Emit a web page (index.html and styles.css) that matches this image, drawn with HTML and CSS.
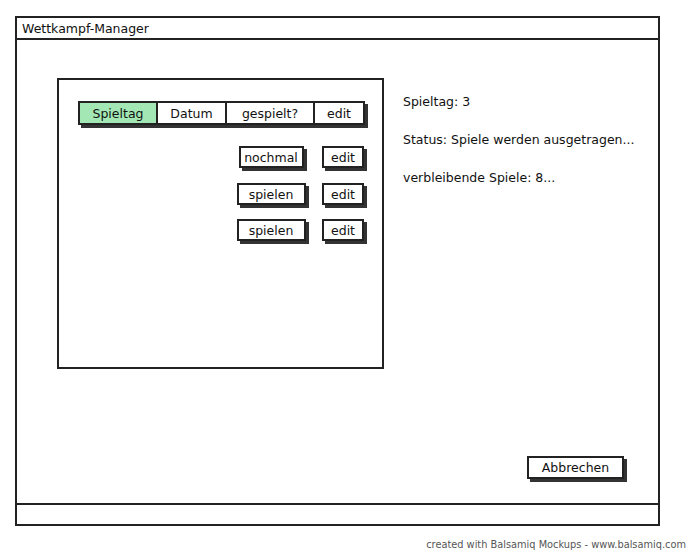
FILE: index.html
```html
<!DOCTYPE html>
<html>
<head>
<meta charset="utf-8">
<link rel="stylesheet" href="styles.css">
</head>
<body>
<div class="window">
  <div class="titlebar">Wettkampf-Manager</div>
  <div class="content">
    <div class="top">
      <div class="panel">
        <div class="tabs">
          <div class="tab tab-active tab-w1">Spieltag</div>
          <div class="tab tab-w2">Datum</div>
          <div class="tab tab-w3">gespielt?</div>
          <div class="tab tab-w4">edit</div>
        </div>
        <div class="rows">
          <div class="btn btn-a">nochmal</div>
          <div class="btn btn-edit">edit</div>
          <div class="btn btn-b">spielen</div>
          <div class="btn btn-edit">edit</div>
          <div class="btn btn-b">spielen</div>
          <div class="btn btn-edit">edit</div>
        </div>
      </div>
      <div class="info">
        <p>Spieltag: 3</p>
        <p>Status: Spiele werden ausgetragen...</p>
        <p>verbleibende Spiele: 8...</p>
      </div>
    </div>
    <div class="actions">
      <div class="btn btn-cancel">Abbrechen</div>
    </div>
  </div>
  <div class="statusbar"></div>
</div>
<div class="credit">created with Balsamiq Mockups - www.balsamiq.com</div>
</body>
</html>
```
FILE: styles.css
```css
* { box-sizing: border-box; }
html, body { margin: 0; padding: 0; background: #fff; }
body {
  font-family: "DejaVu Sans", "Liberation Sans", sans-serif;
  font-size: 12.5px;
  color: #111;
  width: 691px;
  height: 558px;
  overflow: hidden;
}
.window {
  margin: 16px 0 0 15px;
  width: 645px;
  height: 510px;
  border: 2px solid #222;
  display: flex;
  flex-direction: column;
}
.titlebar {
  height: 22px;
  border-bottom: 2px solid #222;
  padding: 3px 0 0 5px;
  line-height: 16px;
}
.content {
  flex: 1;
  display: flex;
  flex-direction: column;
  padding: 38px 34px 24px 40px;
}
.top {
  display: flex;
  gap: 19px;
}
.panel {
  flex: none;
  width: 327px;
  height: 291px;
  border: 2px solid #222;
  padding: 21px 0 0 19px;
}
.tabs {
  display: flex;
  width: 287px;
  height: 24px;
  border: 2px solid #222;
  box-shadow: 3px 3px 0 #333;
  background: #fff;
}
.tab {
  display: flex;
  align-items: center;
  justify-content: center;
  height: 100%;
  border-right: 2px solid #222;
}
.tab:last-child { border-right: none; }
.tab-active { background: #a3e8b4; }
.tab-w1 { width: 78px; }
.tab-w2 { width: 69px; }
.tab-w3 { width: 88px; }
.tab-w4 { flex: 1; }
.rows {
  display: grid;
  grid-template-columns: 72px 42px;
  column-gap: 15px;
  row-gap: 14px;
  width: 286px;
  justify-content: end;
  justify-items: center;
  margin-top: 21px;
}
.btn {
  display: flex;
  align-items: center;
  justify-content: center;
  height: 22px;
  border: 2px solid #222;
  box-shadow: 3px 3px 0 #333;
  background: #fff;
  white-space: nowrap;
}
.btn-a { width: 65px; }
.btn-b { width: 69px; }
.btn-edit { width: 42px; }
.rows .btn:nth-child(3), .rows .btn:nth-child(4) { margin-top: 1px; }
.info {
  padding-top: 16px;
  display: flex;
  flex-direction: column;
  gap: 22px;
  white-space: nowrap;
}
.info p { margin: 0; line-height: 16px; }
.actions {
  margin-top: auto;
  display: flex;
  justify-content: flex-end;
}
.btn-cancel { width: 97px; height: 23px; }
.statusbar {
  height: 21px;
  border-top: 2px solid #222;
}
.credit {
  margin-top: 12px;
  text-align: right;
  padding-right: 5px;
  font-size: 9.8px;
  color: #555;
  line-height: 14px;
}
```
